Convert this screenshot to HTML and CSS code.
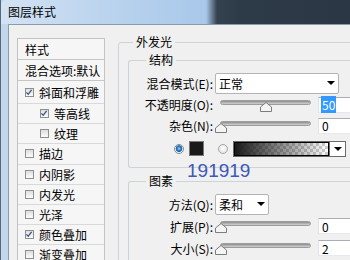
FILE: index.html
```html
<!DOCTYPE html>
<html lang="zh">

<head>
    <meta charset="UTF-8">
    <meta name="viewport" content="width=device-width, initial-scale=1.0">
    <title>图层样式</title>

    <link rel="stylesheet" href="styles.css">
</head>

<body>
    <div class="window">
        <div class="titlebar">图层样式</div>

        <div class="frame">
            <div class="client">
                <ul class="styles">
                    <li class="item head">样式</li>
                    <li class="item blend">混合选项:默认</li>
                    <li class="item first"><span class="box"><svg width="9" height="9" viewBox="0 0 9 9"><path d="M1.6 4.4 L3.6 6.6 L7.4 1.6" fill="none" stroke="#34507c" stroke-width="1.4"/></svg></span>斜面和浮雕</li>
                    <li class="item sub"><span class="box"><svg width="9" height="9" viewBox="0 0 9 9"><path d="M1.6 4.4 L3.6 6.6 L7.4 1.6" fill="none" stroke="#34507c" stroke-width="1.4"/></svg></span>等高线</li>
                    <li class="item sub"><span class="box"></span>纹理</li>
                    <li class="item"><span class="box"></span>描边</li>
                    <li class="item"><span class="box"></span>内阴影</li>
                    <li class="item"><span class="box"></span>内发光</li>
                    <li class="item"><span class="box"></span>光泽</li>
                    <li class="item"><span class="box"><svg width="9" height="9" viewBox="0 0 9 9"><path d="M1.6 4.4 L3.6 6.6 L7.4 1.6" fill="none" stroke="#34507c" stroke-width="1.4"/></svg></span>颜色叠加</li>
                    <li class="item"><span class="box"></span>渐变叠加</li>
                </ul>

                <div class="panel">
                    <fieldset class="group outer">
                        <legend>外发光</legend>

                        <fieldset class="group structure">
                            <legend>结构</legend>
                            <div class="row tall">
                                <label class="label">混合模式(E):</label>
                                <div class="select mode">正常<span class="arrow"></span></div>
                            </div>
                            <div class="row">
                                <label class="label">不透明度(O):</label>
                                <div class="slider">
                                    <div class="track"></div>
                                    <svg class="handle" style="left:47px" width="12" height="10" viewBox="0 0 12 10"><polygon points="6,0.5 11.5,5 11.5,9.5 0.5,9.5 0.5,5" fill="#f4f4f4" stroke="#7c7c7c"/></svg>
                                </div>
                                <div class="num"><span class="sel">50</span></div>
                            </div>
                            <div class="row">
                                <label class="label">杂色(N):</label>
                                <div class="slider">
                                    <div class="track"></div>
                                    <svg class="handle" style="left:2px" width="12" height="10" viewBox="0 0 12 10"><polygon points="6,0.5 11.5,5 11.5,9.5 0.5,9.5 0.5,5" fill="#f4f4f4" stroke="#7c7c7c"/></svg>
                                </div>
                                <div class="num">0</div>
                            </div>
                            <div class="row color">
                                <span class="radio on"></span>
                                <span class="swatch"></span>
                                <span class="radio"></span>
                                <div class="gradient">
                                    <div class="ramp"></div>
                                    <div class="drop"><span class="arrow"></span></div>
                                </div>
                            </div>
                        </fieldset>

                        <fieldset class="group elements">
                            <legend>图素</legend>
                            <div class="row tall">
                                <label class="label">方法(Q):</label>
                                <div class="select method">柔和<span class="arrow"></span></div>
                            </div>
                            <div class="row tall">
                                <label class="label">扩展(P):</label>
                                <div class="slider">
                                    <div class="track"></div>
                                    <svg class="handle" style="left:2px" width="12" height="10" viewBox="0 0 12 10"><polygon points="6,0.5 11.5,5 11.5,9.5 0.5,9.5 0.5,5" fill="#f4f4f4" stroke="#7c7c7c"/></svg>
                                </div>
                                <div class="num">0</div>
                            </div>
                            <div class="row tall">
                                <label class="label">大小(S):</label>
                                <div class="slider">
                                    <div class="track"></div>
                                    <svg class="handle" style="left:2px" width="12" height="10" viewBox="0 0 12 10"><polygon points="6,0.5 11.5,5 11.5,9.5 0.5,9.5 0.5,5" fill="#f4f4f4" stroke="#7c7c7c"/></svg>
                                </div>
                                <div class="num">2</div>
                            </div>
                        </fieldset>
                    </fieldset>
                </div>
            </div>
        </div>

        <!-- colour value written over the screenshot -->
        <div class="note">191919</div>
    </div>
</body>

</html>
```

FILE: styles.css
```css
* {
    box-sizing: border-box;
}

body {
    margin: 0;
    width: 350px;
    height: 260px;
    overflow: hidden;
    font-family: "Noto Sans CJK SC", "Noto Sans", sans-serif;
    font-size: 12px;
    color: #000;
}

.window {
    position: relative;
    width: 350px;
    height: 260px;
    background: #c2d6ec;
    border-left: 1px solid #56687a;
}

.titlebar {
    height: 24px;
    line-height: 24px;
    padding-left: 7px;
    border-top-left-radius: 5px;
    background: linear-gradient(to right, #d3e3f4 0, #bcd4ee 100px, #a8c8ea 205px, #34414f 216px, #2d3a48 240px, #2b3744 100%);
}

.frame {
    display: flex;
    height: 236px;
    padding-left: 7px;
}

.client {
    flex: 1;
    display: flex;
    align-items: flex-start;
    background: #f0f0f0;
    border-top: 1px solid #8d9aa7;
    border-left: 1px solid #8d9aa7;
    overflow: hidden;
}

/* left list of layer styles */

.styles {
    flex: none;
    width: 88px;
    margin: 13px 0 0 8px;
    padding: 0;
    list-style: none;
    background: #f6f6f6;
    border: 1px solid #c3c3c3;
    border-bottom: 0;
}

.item {
    display: flex;
    align-items: center;
    height: 20.2px;
    padding-left: 7px;
    border-bottom: 1px solid #d9d9d9;
    white-space: nowrap;
}

.item.head,
.item.blend {
    height: 21px;
    border-bottom-color: #c6c6c6;
}

.item.first {
    height: 23px;
}

.item.sub {
    padding-left: 22px;
}

.box {
    flex: none;
    width: 9px;
    height: 9px;
    margin-right: 5px;
    border: 1px solid #8e8f8f;
    background: linear-gradient(#dedede, #fbfbfb);
    display: flex;
}

.box svg {
    margin: -1px 0 0 -1px;
}

/* right panel */

.panel {
    flex: none;
    margin: 9px 0 0 13px;
}

.group {
    margin: 0;
    padding: 0;
    border: 1px solid #cdd3d8;
    border-radius: 3px;
}

.group legend {
    padding: 0 3px;
    line-height: 16px;
}

.outer {
    width: 262px;
    height: 260px;
}

.outer > legend {
    margin-left: 14px;
}

.structure,
.elements {
    margin-left: 9px;
    border-right: 0;
}

.structure > legend,
.elements > legend {
    margin-left: 17px;
}

.structure {
    margin-top: 2px;
    padding: 4px 0 6px;
}

.elements {
    margin-top: 5px;
    padding-top: 4px;
    height: 120px;
}

.row {
    display: flex;
    align-items: center;
    height: 21px;
}

.row.tall {
    height: 22px;
}

.label {
    display: block;
    flex: none;
    width: 84px;
    text-align: right;
    white-space: nowrap;
}

.select {
    flex: none;
    display: flex;
    align-items: center;
    height: 21px;
    margin-left: 2px;
    padding-left: 3px;
    background: #fff;
    border: 1px solid #b4b4b4;
    border-radius: 2px;
}

.select.mode {
    width: 124px;
}

.select.method {
    width: 54px;
}

.arrow {
    width: 0;
    height: 0;
    margin-left: auto;
    margin-right: 3px;
    border-left: 4px solid transparent;
    border-right: 4px solid transparent;
    border-top: 4px solid #000;
}

.slider {
    position: relative;
    flex: none;
    width: 105px;
    height: 14px;
}

.track {
    width: 91px;
    height: 5px;
    margin: 2px 0 0 7px;
    border: 1px solid #9c9c9c;
    border-radius: 3px;
    background: linear-gradient(#8e8e8e, #d2d2d2);
}

.handle {
    position: absolute;
    top: 4px;
}

.num {
    flex: none;
    display: flex;
    align-items: center;
    width: 45px;
    height: 16px;
    padding-left: 3px;
    background: #fff;
    border: 1px solid #abadb3;
    border-color: #abadb3 #dbdfe6 #e3e9ef #e2e3ea;
}

.sel {
    background: #3399ff;
    color: #fff;
    padding: 0 1px;
    margin-left: -1px;
}

.row.color {
    height: 25px;
    padding-left: 45px;
}

.radio {
    flex: none;
    width: 10px;
    height: 10px;
    border-radius: 50%;
    border: 1px solid #a6a6a6;
    background: radial-gradient(circle at 50% 40%, #fff, #dcdcdc);
}

.radio.on {
    border-color: #7f8a96;
    background: radial-gradient(circle at 50% 45%, #8fd0ff 0, #2f80c8 2px, #1d5a98 3px, #e9eef2 3.6px, #fff 5px);
}

.radio + .radio,
.swatch + .radio {
    margin-left: 14px;
}

.swatch {
    flex: none;
    width: 15px;
    height: 15px;
    margin-left: 5px;
    background: #191919;
    border: 1px solid #7a7a7a;
}

.gradient {
    flex: none;
    display: flex;
    width: 113px;
    height: 16px;
    margin-left: 5px;
    border: 1px solid #6a6a6a;
}

.ramp {
    flex: 1;
    border: 1px solid #000;
    background:
        linear-gradient(to right, #191919, rgba(25, 25, 25, 0)),
        conic-gradient(#cfcfcf 25%, #fff 0 50%, #cfcfcf 0 75%, #fff 0) 0 0 / 6px 6px;
}

.drop {
    flex: none;
    display: flex;
    align-items: center;
    width: 16px;
    background: #fff;
    border-left: 1px solid #6a6a6a;
}

.drop .arrow {
    margin: 0 auto;
}

.note {
    position: absolute;
    left: 186px;
    top: 161px;
    font-family: "Liberation Sans", Arial, sans-serif;
    font-size: 19px;
    line-height: 1;
    color: #3c58b8;
}
```
